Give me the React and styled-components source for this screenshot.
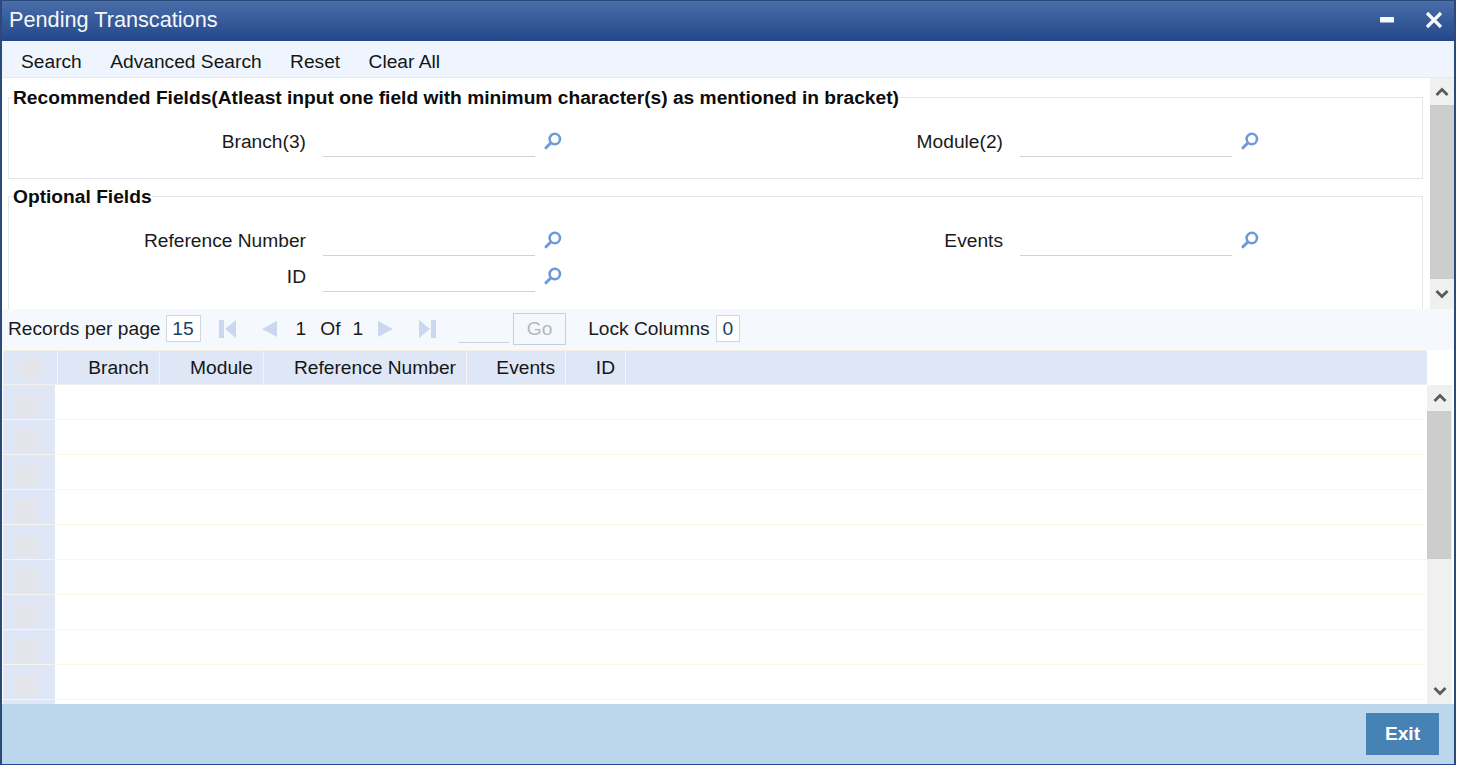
import React from "react";
import styled, { createGlobalStyle } from "styled-components";

const Global = createGlobalStyle`
  html, body { margin: 0; padding: 0; background: #fff; }
  body { font-family: "Liberation Sans", Arial, sans-serif; color: #111; }
  * { box-sizing: border-box; }
`;

const Page = styled.div`
  width: 1456px;
  height: 765px;
  display: flex;
  flex-direction: column;
  overflow: hidden;
  border-left: 2px solid #2b4a7c;
  border-right: 2px solid #2b4a7c;
  border-bottom: 1px solid #2b4a8c;
`;

const TitleBar = styled.header`
  flex: 0 0 41px;
  display: flex;
  align-items: center;
  padding: 0 11px 2px 7px;
  background: linear-gradient(#4a6ea8, #23478a);
  border-top: 1px solid #2b4a7c;
  color: #f4f7fb;
`;

const Title = styled.h1`
  flex: 1;
  margin: 0;
  font-size: 21.7px;
  font-weight: 400;
`;

const WindowIcon = styled.svg`
  display: block;
  margin-left: ${(p) => p.$gap}px;
`;

const Toolbar = styled.nav`
  flex: 0 0 37px;
  display: flex;
  align-items: center;
  gap: 28.4px;
  padding: 5px 0 0 19px;
  background: #eef5fe;
  border-bottom: 1px solid #e6e9ee;
`;

const ToolItem = styled.span`
  font-size: 19.2px;
  color: #151515;
`;

const SearchPane = styled.section`
  flex: 0 0 231px;
  display: flex;
  overflow: hidden;
`;

const FormArea = styled.div`
  flex: 1;
  min-width: 0;
  padding: 0 7px 0 6px;
  overflow: hidden;
`;

const Group = styled.fieldset`
  margin: ${(p) => p.$top}px 0 0;
  padding: ${(p) => p.$pad}px 0 0;
  min-width: 0;
  height: ${(p) => p.$h}px;
  border: 1px solid #e3e6ea;
`;

const GroupTitle = styled.legend`
  margin-left: 4px;
  padding: 0;
  font-size: 19.2px;
  line-height: 21px;
  font-weight: 700;
  color: #0c0c0c;
`;

const FieldGrid = styled.div`
  display: grid;
  grid-template-columns: 697px 697px;
  row-gap: 6px;
`;

const Field = styled.div`
  display: flex;
  align-items: flex-end;
  height: 30px;
`;

const FieldLabel = styled.label`
  width: 297px;
  padding-bottom: 5px;
  text-align: right;
  font-size: 19.2px;
  line-height: 21px;
  color: #1a1a1a;
`;

const FieldInput = styled.div`
  width: 212px;
  height: 30px;
  margin-left: 17px;
  border-bottom: 1px solid #cfd2d6;
`;

const LookupIcon = styled.svg`
  margin: 0 0 7px 9px;
  display: block;
`;

const Track = styled.div`
  flex: 0 0 ${(p) => p.$w}px;
  display: flex;
  flex-direction: column;
  background: #f0f0f0;
  margin-left: ${(p) => p.$ml || 0}px;
`;

const TrackButton = styled.div`
  flex: 0 0 ${(p) => p.$h}px;
  display: flex;
  align-items: center;
  justify-content: center;
`;

const Thumb = styled.div`
  flex: 0 0 ${(p) => p.$h}px;
  margin-right: ${(p) => p.$mr || 0}px;
  background: #cdcdcd;
`;

const TrackRest = styled.div`
  flex: 1;
`;

const Pager = styled.div`
  flex: 0 0 41px;
  display: flex;
  align-items: center;
  padding: 0 0 2px 6px;
  background: #f5f9fe;
  font-size: 19.2px;
  color: #1a1a1a;
`;

const PagerText = styled.span`
  margin-left: ${(p) => p.$ml || 0}px;
  white-space: nowrap;
`;

const NumberBox = styled.div`
  width: ${(p) => p.$w}px;
  height: 27px;
  margin-left: ${(p) => p.$ml}px;
  display: flex;
  align-items: center;
  justify-content: center;
  background: #fff;
  border: 1px solid #d3d6da;
  color: #1c3f66;
`;

const PagerIcon = styled.svg`
  display: block;
  margin-left: ${(p) => p.$ml}px;
`;

const PageInput = styled.div`
  width: 51px;
  height: 23px;
  margin: 6px 0 0 22px;
  border-bottom: 1px solid #cfd2d6;
`;

const GoButton = styled.div`
  width: 53px;
  height: 32px;
  margin-left: 4px;
  display: flex;
  align-items: center;
  justify-content: center;
  border: 1px solid #c6cfdb;
  color: #b4b9c0;
  background: #f5f9fe;
`;

const GridHead = styled.div`
  flex: 0 0 35px;
  width: 1424px;
  margin-left: 1px;
  display: flex;
  background: #dfe7f6;
  border-top: 1px solid #f6efe6;
  border-bottom: 1px solid #f0f0ee;
`;

const SelectHead = styled.div`
  flex: 0 0 55px;
  display: flex;
  align-items: center;
  padding-left: 15px;
  border-left: 1px solid #e8e8e8;
  border-right: 1px solid #f8f5ee;
`;

const Check = styled.div`
  width: 22px;
  height: 22px;
  background: #e3e5ea;
`;

const HeadCell = styled.div`
  flex: 0 0 ${(p) => p.$w}px;
  display: flex;
  align-items: center;
  justify-content: flex-end;
  padding: 1px 10px 0 0;
  font-size: 19.2px;
  color: #151515;
  border-right: 1px solid #f8f5ee;
`;

const GridBody = styled.div`
  flex: 1;
  min-height: 0;
  display: flex;
  overflow: hidden;
`;

const Rows = styled.div`
  flex: 0 0 1423px;
  margin-left: 1px;
  overflow: hidden;
`;

const Row = styled.div`
  height: 35px;
  display: flex;
`;

const RowHead = styled.div`
  flex: 0 0 52px;
  display: flex;
  align-items: flex-start;
  padding: 10px 0 0 12px;
  background: #dfe7f6;
  border-bottom: 1px solid #f7f4ee;
`;

const RowCell = styled.div`
  flex: 1;
  background: #fff;
  border-bottom: 1px solid #fbf6e6;
`;

const Footer = styled.footer`
  flex: 0 0 60px;
  display: flex;
  align-items: flex-start;
  justify-content: flex-end;
  padding: 9px 15px 0 0;
  background: #bcd7ec;
`;

const ExitButton = styled.button`
  width: 73px;
  height: 42px;
  padding: 0;
  border: 0;
  background: #4682b4;
  color: #fff;
  font: 700 19.2px "Liberation Sans", Arial, sans-serif;
`;

const Lookup = () => (
  <LookupIcon width="18" height="18" viewBox="0 0 18 18" fill="none">
    <circle cx="10.8" cy="7" r="5.2" stroke="#6d9ad8" strokeWidth="2.6" />
    <path d="M6.8 11 2 15.8" stroke="#6d9ad8" strokeWidth="3" strokeLinecap="round" />
  </LookupIcon>
);

const Chevron = ({ up }) => (
  <svg width="14" height="10" viewBox="0 0 14 10" fill="none">
    <path d={up ? "M1.5 8 7 2.5 12.5 8" : "M1.5 2 7 7.5 12.5 2"} stroke="#5a5a5a" strokeWidth="2.8" />
  </svg>
);

const rows = Array.from({ length: 10 }, (_, i) => i);

export default function App() {
  return (
    <Page>
      <Global />
      <TitleBar>
        <Title>Pending Transcations</Title>
        <WindowIcon $gap={0} width="14" height="6" viewBox="0 0 14 6">
          <rect width="14" height="5.5" rx="0.5" fill="#f6f8fb" />
        </WindowIcon>
        <WindowIcon $gap={31} width="18" height="18" viewBox="0 0 18 18">
          <path d="M2 2 16 16M16 2 2 16" stroke="#f6f8fb" strokeWidth="3.2" />
        </WindowIcon>
      </TitleBar>
      <Toolbar>
        <ToolItem>Search</ToolItem>
        <ToolItem>Advanced Search</ToolItem>
        <ToolItem>Reset</ToolItem>
        <ToolItem>Clear All</ToolItem>
      </Toolbar>
      <SearchPane>
        <FormArea>
          <Group $top={9} $h={92} $pad={19}>
            <GroupTitle>Recommended Fields(Atleast input one field with minimum character(s) as mentioned in bracket)</GroupTitle>
            <FieldGrid>
              <Field>
                <FieldLabel>Branch(3)</FieldLabel>
                <FieldInput />
                <Lookup />
              </Field>
              <Field>
                <FieldLabel>Module(2)</FieldLabel>
                <FieldInput />
                <Lookup />
              </Field>
            </FieldGrid>
          </Group>
          <Group $top={7} $h={140} $pad={19}>
            <GroupTitle>Optional Fields</GroupTitle>
            <FieldGrid>
              <Field>
                <FieldLabel>Reference Number</FieldLabel>
                <FieldInput />
                <Lookup />
              </Field>
              <Field>
                <FieldLabel>Events</FieldLabel>
                <FieldInput />
                <Lookup />
              </Field>
              <Field>
                <FieldLabel>ID</FieldLabel>
                <FieldInput />
                <Lookup />
              </Field>
            </FieldGrid>
          </Group>
        </FormArea>
        <Track $w={24}>
          <TrackButton $h={27}><Chevron up /></TrackButton>
          <Thumb $h={174} />
          <TrackButton $h={30}><Chevron /></TrackButton>
        </Track>
      </SearchPane>
      <Pager>
        <PagerText>Records per page</PagerText>
        <NumberBox $w={35} $ml={5}>15</NumberBox>
        <PagerIcon $ml={18} width="17" height="18" viewBox="0 0 17 18"><path d="M0 0h5v18H0zM17 0v18L6 9z" fill="#c9d8f0" /></PagerIcon>
        <PagerIcon $ml={26} width="15" height="16" viewBox="0 0 15 16"><path d="M15 0v16L0 8z" fill="#c9d8f0" /></PagerIcon>
        <PagerText $ml={19}>1</PagerText>
        <PagerText $ml={14}>Of</PagerText>
        <PagerText $ml={12}>1</PagerText>
        <PagerIcon $ml={15} width="15" height="16" viewBox="0 0 15 16"><path d="M0 0v16l15-8z" fill="#c9d8f0" /></PagerIcon>
        <PagerIcon $ml={26} width="17" height="18" viewBox="0 0 17 18"><path d="M17 0h-5v18h5zM0 0v18l11-9z" fill="#c9d8f0" /></PagerIcon>
        <PageInput />
        <GoButton>Go</GoButton>
        <PagerText $ml={22}>Lock Columns</PagerText>
        <NumberBox $w={24} $ml={6}>0</NumberBox>
      </Pager>
      <GridHead>
        <SelectHead><Check /></SelectHead>
        <HeadCell $w={102}>Branch</HeadCell>
        <HeadCell $w={104}>Module</HeadCell>
        <HeadCell $w={203}>Reference Number</HeadCell>
        <HeadCell $w={99}>Events</HeadCell>
        <HeadCell $w={60}>ID</HeadCell>
      </GridHead>
      <GridBody>
        <Rows>
          {rows.map((r) => (
            <Row key={r}>
              <RowHead><Check /></RowHead>
              <RowCell />
            </Row>
          ))}
        </Rows>
        <Track $w={25} $ml={1}>
          <TrackButton $h={26}><Chevron up /></TrackButton>
          <Thumb $h={148} $mr={1} />
          <TrackRest />
          <TrackButton $h={26}><Chevron /></TrackButton>
        </Track>
      </GridBody>
      <Footer>
        <ExitButton>Exit</ExitButton>
      </Footer>
    </Page>
  );
}
